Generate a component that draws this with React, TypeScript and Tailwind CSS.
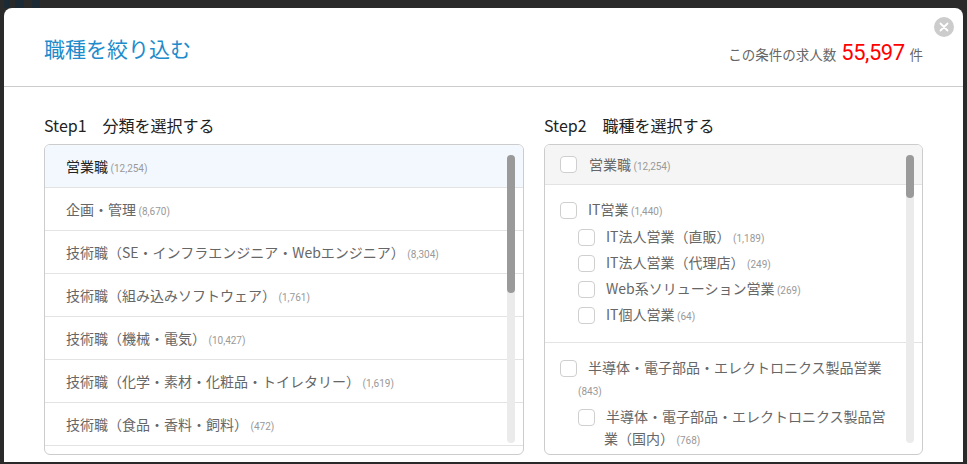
const categories = [
  { name: "営業職", count: "12,254", active: true },
  { name: "企画・管理", count: "8,670" },
  { name: "技術職（SE・インフラエンジニア・Webエンジニア）", count: "8,304" },
  { name: "技術職（組み込みソフトウェア）", count: "1,761" },
  { name: "技術職（機械・電気）", count: "10,427" },
  { name: "技術職（化学・素材・化粧品・トイレタリー）", count: "1,619" },
  { name: "技術職（食品・香料・飼料）", count: "472" },
  { name: "専門職（コンサルタント・金融・不動産）", count: "3,014" },
];

const groups = [
  {
    name: "IT営業",
    count: "1,440",
    items: [
      { name: "IT法人営業（直販）", count: "1,189" },
      { name: "IT法人営業（代理店）", count: "249" },
      { name: "Web系ソリューション営業", count: "269" },
      { name: "IT個人営業", count: "64" },
    ],
  },
  {
    name: "半導体・電子部品・エレクトロニクス製品営業",
    count: "843",
    items: [
      { name: "半導体・電子部品・エレクトロニクス製品営業（国内）", count: "768" },
      { name: "半導体・電子部品・エレクトロニクス製品営業（海外）", count: "75" },
    ],
  },
];

const Count = ({ value }: { value: string }) => (
  <span className="font-['Roboto',sans-serif] text-[10px] leading-none text-[#999]">
    {" "}({value})
  </span>
);

const Checkbox = ({ className = "" }: { className?: string }) => (
  <span
    className={`inline-block w-[17px] h-[17px] rounded-[4px] border border-[#cfcfcf] bg-white align-[-4px] ${className}`}
  />
);

const Scrollbar = ({ thumb }: { thumb: string }) => (
  <div className="absolute top-[10px] bottom-[11px] right-[8px] w-[8px] rounded-full bg-[#ebebeb]">
    <div className={`w-full rounded-full bg-[#9a9a9a] ${thumb}`} />
  </div>
);

export default function App() {
  return (
    <div className="h-[464px] w-[967px] overflow-hidden bg-[#2a2a2a] font-['Noto_Sans_CJK_JP','Noto_Sans',sans-serif]">
      {/* page behind the overlay */}
      <div className="flex h-[8px] gap-[5px] pl-[4px]">
        <div className="w-[6px] bg-[#1b2a35]" />
        <div className="w-[9px] bg-[#1b2a35]" />
        <div className="ml-[3px] w-[8px] bg-[#1b2a35]" />
      </div>

      <div className="relative ml-[4px] h-[454px] w-[959px] overflow-hidden rounded-t-[8px] bg-white">
        <button className="absolute right-[9px] top-[9px] flex h-[20px] w-[20px] items-center justify-center rounded-full bg-[#cccccc]">
          <svg width="10" height="10" viewBox="0 0 10 10">
            <path d="M1.5 1.5 L8.5 8.5 M8.5 1.5 L1.5 8.5" stroke="#fff" strokeWidth="1.8" strokeLinecap="round" />
          </svg>
        </button>

        {/* Header */}
        <div className="flex h-[79px] items-start justify-between border-b border-[#cccccc] px-[40px] pt-[25px]">
          <h1 className="text-[21px] leading-[30px] text-[#1e8bcb]">職種を絞り込む</h1>
          <div className="mt-[5px] flex items-baseline text-[#666]">
            <span className="text-[13.5px]">この条件の求人数</span>
            <span className="mx-[5px] font-['Roboto',sans-serif] text-[22px] leading-[30px] tracking-[-0.5px] text-[#ff0000]">
              55,597
            </span>
            <span className="text-[13.5px]">件</span>
          </div>
        </div>

        <div className="flex gap-[20px] px-[40px] pt-[26px]">
          {/* Step1 */}
          <div className="w-[480px]">
            <h2 className="mb-[7px] text-[16px] leading-[24px] text-[#222]">Step1　分類を選択する</h2>
            <div className="relative h-[311px] overflow-hidden rounded-[6px] border border-[#cccccc]">
              {categories.map((c) => (
                <div
                  key={c.name}
                  className={`flex h-[43px] items-center border-b border-[#e3e3e3] pl-[21px] text-[14px] ${
                    c.active ? "bg-[#f2f8fe] text-[#222]" : "text-[#666]"
                  }`}
                >
                  <span className="whitespace-nowrap">
                    {c.name}
                    <Count value={c.count} />
                  </span>
                </div>
              ))}
              <Scrollbar thumb="h-[138px]" />
            </div>
          </div>

          {/* Step2 */}
          <div className="flex-1">
            <h2 className="mb-[7px] text-[16px] leading-[24px] text-[#222]">Step2　職種を選択する</h2>
            <div className="relative h-[311px] overflow-hidden rounded-[6px] border border-[#cccccc]">
              <div className="flex h-[40px] items-center border-b border-[#e3e3e3] bg-[#f5f5f5] pl-[15px] text-[14px] text-[#666]">
                <Checkbox className="mr-[12px]" />
                <span>
                  営業職
                  <Count value="12,254" />
                </span>
              </div>

              {groups.map((g) => (
                <div key={g.name} className="border-b border-[#e3e3e3] pb-[15px] pl-[15px] pr-[29px] pt-[11px] text-[14px] text-[#666]">
                  <div className="py-[2px] pl-[18px] leading-[22px]">
                    <Checkbox className="-ml-[18px] mr-[11px]" />
                    {g.name}
                    <Count value={g.count} />
                  </div>
                  <div className="mt-[1px]">
                    {g.items.map((it) => (
                      <div key={it.name} className="ml-[18px] py-[2px] pl-[26px] leading-[22px]">
                        <Checkbox className="-ml-[26px] mr-[11px]" />
                        {it.name}
                        <Count value={it.count} />
                      </div>
                    ))}
                  </div>
                </div>
              ))}
              <Scrollbar thumb="h-[43px]" />
            </div>
          </div>
        </div>
      </div>
    </div>
  );
}
